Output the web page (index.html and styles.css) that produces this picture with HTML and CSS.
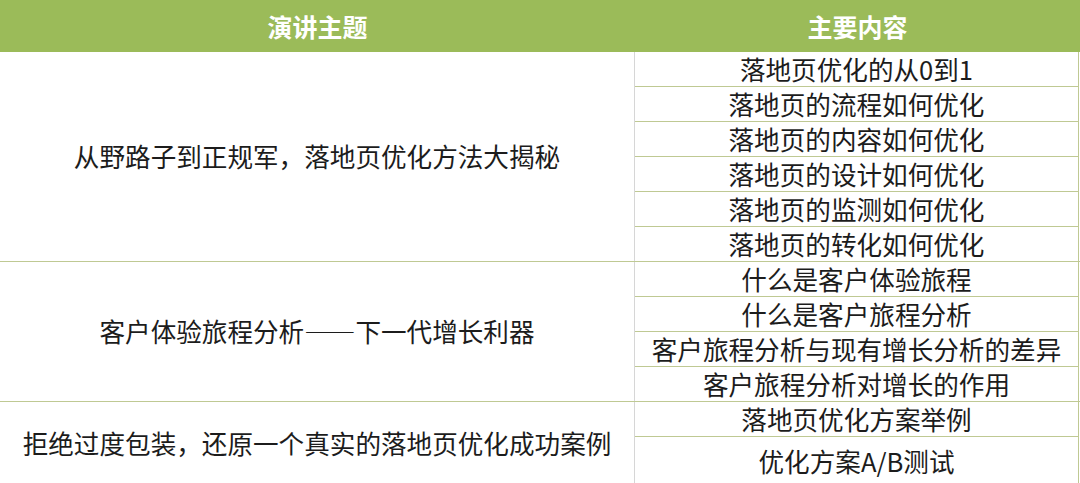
FILE: index.html
```html
<!DOCTYPE html>
<html lang="zh-CN">
<head>
<meta charset="utf-8">
<link rel="stylesheet" href="styles.css">
</head>
<body>
<div class="table">
  <div class="head">
    <div class="hcell left">演讲主题</div>
    <div class="hcell right">主要内容</div>
  </div>
  <div class="group">
    <div class="topic">从野路子到正规军，落地页优化方法大揭秘</div>
    <div class="items">
      <div class="item">落地页优化的从0到1</div>
      <div class="item">落地页的流程如何优化</div>
      <div class="item">落地页的内容如何优化</div>
      <div class="item">落地页的设计如何优化</div>
      <div class="item">落地页的监测如何优化</div>
      <div class="item">落地页的转化如何优化</div>
    </div>
  </div>
  <div class="group">
    <div class="topic">客户体验旅程分析——下一代增长利器</div>
    <div class="items">
      <div class="item">什么是客户体验旅程</div>
      <div class="item">什么是客户旅程分析</div>
      <div class="item">客户旅程分析与现有增长分析的差异</div>
      <div class="item">客户旅程分析对增长的作用</div>
    </div>
  </div>
  <div class="group last">
    <div class="topic">拒绝过度包装，还原一个真实的落地页优化成功案例</div>
    <div class="items">
      <div class="item">落地页优化方案举例</div>
      <div class="item tall">优化方案A/B测试</div>
    </div>
  </div>
</div>
</body>
</html>
```

FILE: styles.css
```css
html, body {
  margin: 0;
  padding: 0;
  background: #ffffff;
}
body {
  font-family: "Noto Sans CJK SC", "Noto Sans", sans-serif;
  color: #1c1c1c;
  font-size: 25.6px;
  overflow: hidden;
}
.table {
  width: 1080px;
}
.head {
  display: flex;
  height: 52px;
  background: #9bbb59;
}
.hcell {
  display: flex;
  align-items: center;
  justify-content: center;
  color: #ffffff;
  font-weight: bold;
  font-size: 25px;
}
.hcell.left {
  width: 635px;
}
.hcell.right {
  flex: 1;
}
.group {
  display: flex;
  border-bottom: 1px solid #bfc993;
}
.topic {
  width: 635px;
  border-right: 1px solid #d6d6d6;
  display: flex;
  align-items: center;
  justify-content: center;
  padding-bottom: 2px;
  box-sizing: border-box;
}
.items {
  width: 443px;
  border-right: 1px solid #bfc993;
  display: flex;
  flex-direction: column;
}
.item {
  height: 33px;
  padding-bottom: 1px;
  display: flex;
  align-items: center;
  justify-content: center;
  border-bottom: 1px solid #bfc993;
  line-height: 1;
}
.item:last-child {
  border-bottom: none;
}
.item.tall {
  height: 47px;
}
.group.last {
  border-bottom: none;
}
```
